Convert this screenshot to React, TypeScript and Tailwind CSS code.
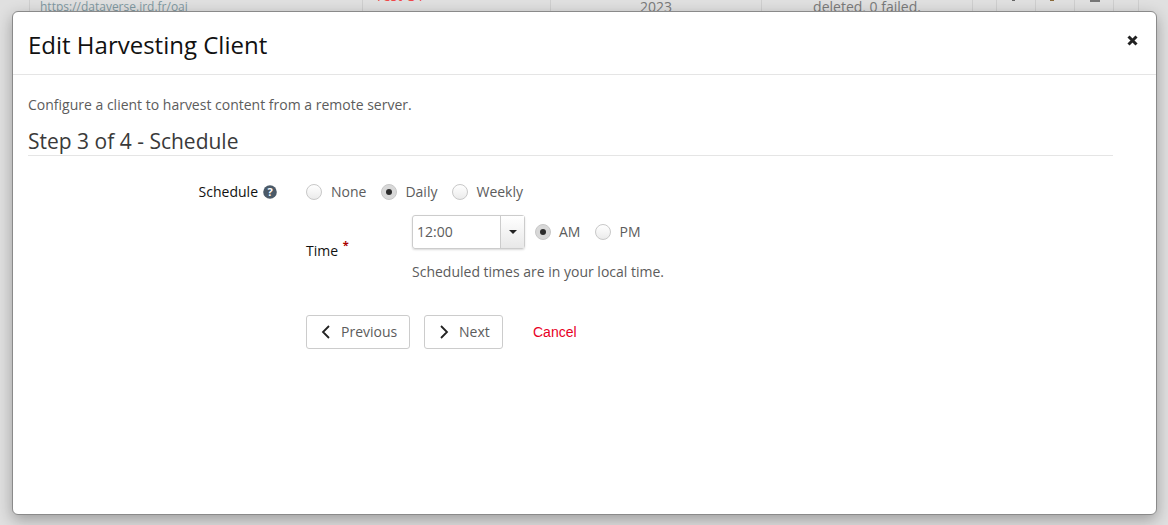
const font = "font-['Open_Sans',sans-serif]"

function Radio({ label, checked, gap, className }: { label: string; checked?: boolean; gap?: string; className?: string }) {
  return (
    <label className={`flex items-center ${className ?? ''}`}>
      <span
        className={`w-4 h-4 rounded-full border border-[#c8c8c8] flex items-center justify-center ${
          checked ? 'bg-[#d8d8d8]' : 'bg-gradient-to-b from-white to-[#ebebeb]'
        }`}
      >
        {checked && <span className="w-[6px] h-[6px] rounded-full bg-[#2c2c2c]" />}
      </span>
      <span className={`${gap ?? 'ml-2'} text-sm leading-5 text-[#5c5c5c]`}>{label}</span>
    </label>
  )
}

function NavButton({ label, icon, className }: { label: string; icon: 'prev' | 'next'; className?: string }) {
  return (
    <button className={`h-[34px] flex items-center border border-[#ccc] rounded-[3px] bg-white text-sm text-[#5c5c5c] ${className ?? ''}`}>
      <svg width="10" height="14" viewBox="0 0 10 14" className="text-[#222] mr-[10px]" fill="none" stroke="currentColor" strokeWidth="1.8">
        <path d={icon === 'prev' ? 'M8 1 L2 7 L8 13' : 'M2 1 L8 7 L2 13'} />
      </svg>
      {label}
    </button>
  )
}

// dimmed table row that peeks out above the modal
function BackgroundRow() {
  const cells = [
    { w: 'w-[333px]', text: 'https://dataverse.ird.fr/oai', cls: 'pl-[10px] text-xs leading-[14px] text-[#7f98a0]' },
    { w: 'w-[188px]', text: 'Test OT', cls: 'pl-3 text-sm leading-[14px] text-[#f04848] -mt-[11px]' },
    { w: 'w-[211px]', text: '2023', cls: 'text-center text-sm leading-[14px] text-[#7a7a7a]' },
    { w: 'w-[211px]', text: 'deleted, 0 failed.', cls: 'text-center text-sm leading-[14px] text-[#7a7a7a]' },
    { w: 'w-[24px]', text: '', cls: '' },
    { w: 'w-[39px]', text: '', cls: '', mark: 'ml-[15px] w-[3px] h-[1px] bg-[#666]' },
    { w: 'w-[39px]', text: '', cls: '', mark: 'ml-[14px] w-[4px] h-[1px] bg-[#8a6a3a]' },
    { w: 'w-[39px]', text: '', cls: '', mark: 'ml-[15px] w-[10px] h-[2px] bg-[#777]' },
    { w: 'w-[26px]', text: '', cls: 'border-r' },
  ]
  return (
    <div className="ml-[29px] flex h-[14px]">
      {cells.map((c, i) => (
        <div key={i} className={`${c.w} border-l border-[#cfcfcf] whitespace-nowrap ${c.cls}`}>
          {c.text}
          {c.mark && <div className={c.mark} />}
        </div>
      ))}
    </div>
  )
}

export default function App() {
  return (
    <div className={`${font} w-[1168px] h-[525px] overflow-hidden bg-[#e0e0e0] relative`}>
      <BackgroundRow />

      <div className="absolute left-3 top-[11px] w-[1145px] h-[504px] bg-white border border-[#8a8a8a] rounded-[6px] shadow-[0_5px_15px_rgba(0,0,0,0.3)]">
        <div className="h-[63px] border-b border-[#e5e5e5] flex items-center justify-between pl-[15px] pr-[18px]">
          <h1 className="text-2xl text-[#111] font-normal leading-[34px] mt-[3px]">Edit Harvesting Client</h1>
          <span className="text-[#222] -mt-[6px]">
            <svg width="11" height="11" viewBox="0 0 11 11" className="block">
              <path d="M1.5 1.5 L9.5 9.5 M9.5 1.5 L1.5 9.5" stroke="currentColor" strokeWidth="3" />
            </svg>
          </span>
        </div>

        <div className="pl-[15px] pr-[43px] pt-[20px]">
          <p className="text-sm leading-5 text-[#5c5c5c]">Configure a client to harvest content from a remote server.</p>
          <h2 className="mt-[11px] text-[21px] leading-[30px] text-[#3a3a3a] border-b border-[#e5e5e5] h-[30px]">
            Step 3 of 4 - Schedule
          </h2>

          <div className="mt-[26px] flex">
            <div className="w-[278px] pr-[29px] flex items-start justify-end">
              <span className="text-sm font-medium leading-5 text-[#111] flex items-center">
                Schedule
                <svg className="ml-[5px] w-[14px] h-[14px] text-[#4b5a68]" viewBox="0 0 14 14">
                  <circle cx="7" cy="7" r="6.8" fill="currentColor" />
                  <text x="7" y="11" textAnchor="middle" fontSize="11" fontWeight="700" fill="#fff">?</text>
                </svg>
              </span>
            </div>
            <div>
              <div className="flex items-center h-5">
                <Radio label="None" gap="ml-[9px]" />
                <Radio label="Daily" checked className="ml-[15px]" />
                <Radio label="Weekly" className="ml-[15px]" />
              </div>

              <div className="mt-[13px] flex">
                <div className="w-[106px] pt-[23px]">
                  <span className="text-sm font-medium leading-5 text-[#111]">
                    Time <span className="text-[#a00] font-bold text-[11px] align-top relative -top-[3px] left-[1px]">*</span>
                  </span>
                </div>
                <div>
                  <div className="flex items-center">
                    <div className="w-[113px] h-[34px] flex border border-[#ccc] rounded-[3px] shadow-[0_1px_2px_rgba(0,0,0,0.15)]">
                      <span className="flex-1 pl-[4px] text-sm leading-[31px] text-[#5c5c5c]">12:00</span>
                      <span className="w-6 flex items-center justify-center border-l border-[#ccc] bg-gradient-to-b from-white to-[#e8e8e8]">
                        <span className="border-x-[4px] border-x-transparent border-t-[4px] border-t-[#222]" />
                      </span>
                    </div>
                    <Radio label="AM" checked className="ml-[10px]" />
                    <Radio label="PM" className="ml-[15px]" />
                  </div>
                  <p className="mt-[13px] text-sm leading-5 text-[#5c5c5c]">Scheduled times are in your local time.</p>
                </div>
              </div>

              <div className="mt-[33px] flex items-center">
                <NavButton label="Previous" icon="prev" className="w-[104px] pl-[14px]" />
                <NavButton label="Next" icon="next" className="w-[79px] pl-[14px] ml-[14px]" />
                <a className="ml-[30px] text-sm font-['Liberation_Sans',sans-serif] text-[#e8001f]">Cancel</a>
              </div>
            </div>
          </div>
        </div>
      </div>
    </div>
  )
}
